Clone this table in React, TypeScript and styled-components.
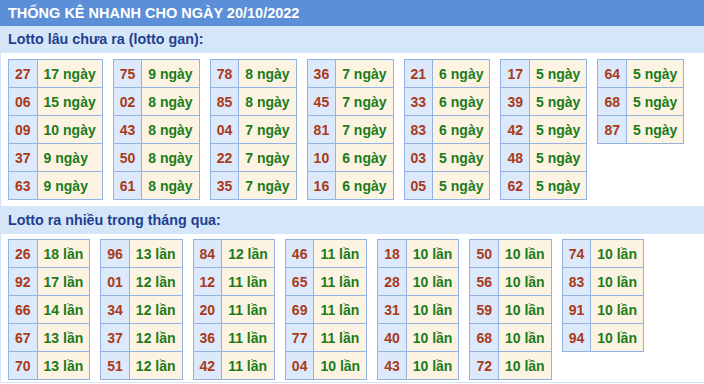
import React from "react";
import styled, { createGlobalStyle } from "styled-components";

const Global = createGlobalStyle`
  html, body { margin: 0; padding: 0; background: #ffffff; }
  body { font-family: "Liberation Sans", Arial, sans-serif; }
`;

const Panel = styled.div`
  width: 703px;
  border-left: 1px solid #d3e3f6;
  border-bottom: 1px solid #d3e3f6;
  padding-bottom: 2px;
`;

const Title = styled.div`
  height: 26px;
  line-height: 26px;
  background: #5b8fd7;
  color: #ffffff;
  font-weight: bold;
  font-size: 14.5px;
  margin-left: -1px;
  padding-left: 8px;
`;

const SubTitle = styled.div<{ $h: number }>`
  height: ${(p) => p.$h}px;
  line-height: ${(p) => p.$h}px;
  background: #d6e6f9;
  color: #1e3f90;
  font-weight: bold;
  font-size: 14.3px;
  padding-left: 7px;
`;

const Grid = styled.div<{ $top: number; $bottom: number }>`
  display: flex;
  flex-wrap: wrap;
  align-items: flex-start;
  gap: 10px;
  padding: ${(p) => p.$top}px 0 ${(p) => p.$bottom}px 7px;
`;

const Table = styled.table`
  border-collapse: collapse;
  font-size: 14px;
  font-weight: bold;
`;

const NumCell = styled.td`
  height: 27px;
  padding: 0 6px;
  border: 1px solid #93b3e2;
  background: #dce9fa;
  color: #a93a1c;
  text-align: center;
`;

const ValCell = styled.td`
  height: 27px;
  padding: 0 6px;
  border: 1px solid #93b3e2;
  background: #fdf3e2;
  color: #1b7c1b;
  white-space: nowrap;
`;

type Row = [string, string];

const gan: Row[][] = [
  [["27", "17 ngày"], ["06", "15 ngày"], ["09", "10 ngày"], ["37", "9 ngày"], ["63", "9 ngày"]],
  [["75", "9 ngày"], ["02", "8 ngày"], ["43", "8 ngày"], ["50", "8 ngày"], ["61", "8 ngày"]],
  [["78", "8 ngày"], ["85", "8 ngày"], ["04", "7 ngày"], ["22", "7 ngày"], ["35", "7 ngày"]],
  [["36", "7 ngày"], ["45", "7 ngày"], ["81", "7 ngày"], ["10", "6 ngày"], ["16", "6 ngày"]],
  [["21", "6 ngày"], ["33", "6 ngày"], ["83", "6 ngày"], ["03", "5 ngày"], ["05", "5 ngày"]],
  [["17", "5 ngày"], ["39", "5 ngày"], ["42", "5 ngày"], ["48", "5 ngày"], ["62", "5 ngày"]],
  [["64", "5 ngày"], ["68", "5 ngày"], ["87", "5 ngày"]],
];

const nhieu: Row[][] = [
  [["26", "18 lần"], ["92", "17 lần"], ["66", "14 lần"], ["67", "13 lần"], ["70", "13 lần"]],
  [["96", "13 lần"], ["01", "12 lần"], ["34", "12 lần"], ["37", "12 lần"], ["51", "12 lần"]],
  [["84", "12 lần"], ["12", "11 lần"], ["20", "11 lần"], ["36", "11 lần"], ["42", "11 lần"]],
  [["46", "11 lần"], ["65", "11 lần"], ["69", "11 lần"], ["77", "11 lần"], ["04", "10 lần"]],
  [["18", "10 lần"], ["28", "10 lần"], ["31", "10 lần"], ["40", "10 lần"], ["43", "10 lần"]],
  [["50", "10 lần"], ["56", "10 lần"], ["59", "10 lần"], ["68", "10 lần"], ["72", "10 lần"]],
  [["74", "10 lần"], ["83", "10 lần"], ["91", "10 lần"], ["94", "10 lần"]],
];

const StatTable = ({ rows }: { rows: Row[] }) => (
  <Table>
    <tbody>
      {rows.map(([n, v]) => (
        <tr key={n}>
          <NumCell>{n}</NumCell>
          <ValCell>{v}</ValCell>
        </tr>
      ))}
    </tbody>
  </Table>
);

export default function App() {
  return (
    <>
      <Global />
      <Panel>
        <Title>THỐNG KÊ NHANH CHO NGÀY 20/10/2022</Title>
        <SubTitle $h={27}>Lotto lâu chưa ra (lotto gan):</SubTitle>
        <Grid $top={6} $bottom={6}>
          {gan.map((t, i) => (
            <StatTable key={i} rows={t} />
          ))}
        </Grid>
        <SubTitle $h={28}>Lotto ra nhiều trong tháng qua:</SubTitle>
        <Grid $top={5} $bottom={0}>
          {nhieu.map((t, i) => (
            <StatTable key={i} rows={t} />
          ))}
        </Grid>
      </Panel>
    </>
  );
}
